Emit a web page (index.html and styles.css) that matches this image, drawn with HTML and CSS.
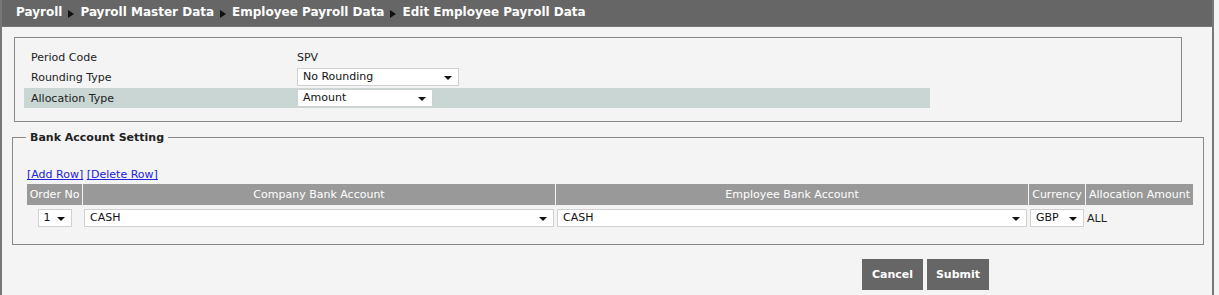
FILE: index.html
```html
<!DOCTYPE html>
<html lang="en">
<head>
  <meta charset="UTF-8" />
  <title>Edit Employee Payroll Data</title>
  <link rel="stylesheet" href="styles.css">
</head>
<body>
  <div class="page">
    <div class="crumbs">
      <span>Payroll</span><i class="sep"></i>
      <span>Payroll Master Data</span><i class="sep"></i>
      <span>Employee Payroll Data</span><i class="sep"></i>
      <span>Edit Employee Payroll Data</span>
    </div>

    <div class="box">
      <div class="row">
        <div class="label">Period Code</div>
        <div class="value">SPV</div>
      </div>
      <div class="row">
        <div class="label">Rounding Type</div>
        <div class="value"><div class="select w-rounding">No Rounding<b class="arrow"></b></div></div>
      </div>
      <div class="row hl">
        <div class="label">Allocation Type</div>
        <div class="value"><div class="select w-amount">Amount<b class="arrow"></b></div></div>
      </div>
    </div>

    <fieldset class="bank">
      <legend>Bank Account Setting</legend>
      <div class="links"><a href="#">[Add Row]</a> <a href="#">[Delete Row]</a></div>
      <table class="grid">
        <thead>
          <tr>
            <th class="c-order">Order No</th>
            <th class="c-acct">Company Bank Account</th>
            <th class="c-acct">Employee Bank Account</th>
            <th class="c-cur">Currency</th>
            <th class="c-amt">Allocation Amount</th>
          </tr>
        </thead>
        <tbody>
          <tr>
            <td><div class="select w-order">1<b class="arrow"></b></div></td>
            <td><div class="select">CASH<b class="arrow"></b></div></td>
            <td><div class="select">CASH<b class="arrow"></b></div></td>
            <td><div class="select">GBP<b class="arrow"></b></div></td>
            <td>ALL</td>
          </tr>
        </tbody>
      </table>
    </fieldset>

    <div class="actions">
      <button class="btn w-cancel">Cancel</button>
      <button class="btn w-submit">Submit</button>
    </div>
  </div>
</body>
</html>
```

FILE: styles.css
```css
* {
  box-sizing: border-box;
}

body {
  margin: 0;
  background: #f4f4f4;
  font-family: "DejaVu Sans", Verdana, sans-serif;
  font-size: 11px;
  color: #222;
}

.page {
  width: 1214px;
  height: 295px;
  border-left: 2px solid #777;
  border-right: 2px solid #777;
}

/* breadcrumb bar */
.crumbs {
  height: 27px;
  background: #666;
  color: #fff;
  font-weight: bold;
  font-size: 12px;
  padding: 0 0 2px 14px;
  display: flex;
  align-items: center;
  border-bottom: 1px solid #777;
}

.crumbs .sep {
  width: 0;
  height: 0;
  border-top: 4px solid transparent;
  border-bottom: 4px solid transparent;
  border-left: 6px solid #111;
  margin: 3px 6px 0 6px;
}

/* top box */
.box {
  margin: 10px 0 0 12px;
  width: 1168px;
  height: 85px;
  border: 1px solid #888;
  padding: 9px 0 0 9px;
}

.row {
  display: flex;
  align-items: center;
  height: 20px;
  width: 906px;
}

.row.hl {
  background: #c9d6d4;
  margin-top: 1px;
}

.label {
  width: 273px;
  padding-left: 7px;
}

.value {
  flex: 1;
}

.select {
  position: relative;
  height: 18px;
  line-height: 16px;
  background: #fff;
  border: 1px solid #d0d0d0;
  padding: 0 16px 0 5px;
  color: #111;
}

.arrow {
  position: absolute;
  right: 6px;
  top: 7px;
  width: 0;
  height: 0;
  border-left: 4px solid transparent;
  border-right: 4px solid transparent;
  border-top: 4px solid #111;
}

.w-rounding { width: 162px; }
.w-amount { width: 136px; }
.w-order { width: 34px; margin: 0 auto; }

/* bank account fieldset */
.bank {
  margin: 9px 0 0 10px;
  width: 1192px;
  height: 114px;
  border: 1px solid #888;
  padding: 22px 9px 0 14px;
}

.bank legend {
  font-weight: bold;
  padding: 0 4px;
  margin-left: -1px;
}

.links {
  height: 17px;
  line-height: 17px;
}

.links a {
  color: #2222dd;
}

.grid {
  border-collapse: separate;
  border-spacing: 1px 1px;
  margin-left: -1px;
  width: 1168px;
}

.grid th {
  background: #999;
  color: #fff;
  font-weight: normal;
  height: 21px;
  padding: 0;
  white-space: nowrap;
}

.grid td {
  padding: 2px 1px 0 1px;
  height: 22px;
  white-space: nowrap;
}

.c-order { width: 55px; }
.c-acct { width: 472px; }
.c-cur { width: 56px; }

/* buttons */
.actions {
  display: flex;
  gap: 4px;
  margin: 14px 0 0 860px;
}

.btn {
  height: 31px;
  background: #666;
  color: #fff;
  border: none;
  font-family: inherit;
  font-size: 11px;
  font-weight: bold;
}

.w-cancel { width: 61px; }
.w-submit { width: 62px; }
```
